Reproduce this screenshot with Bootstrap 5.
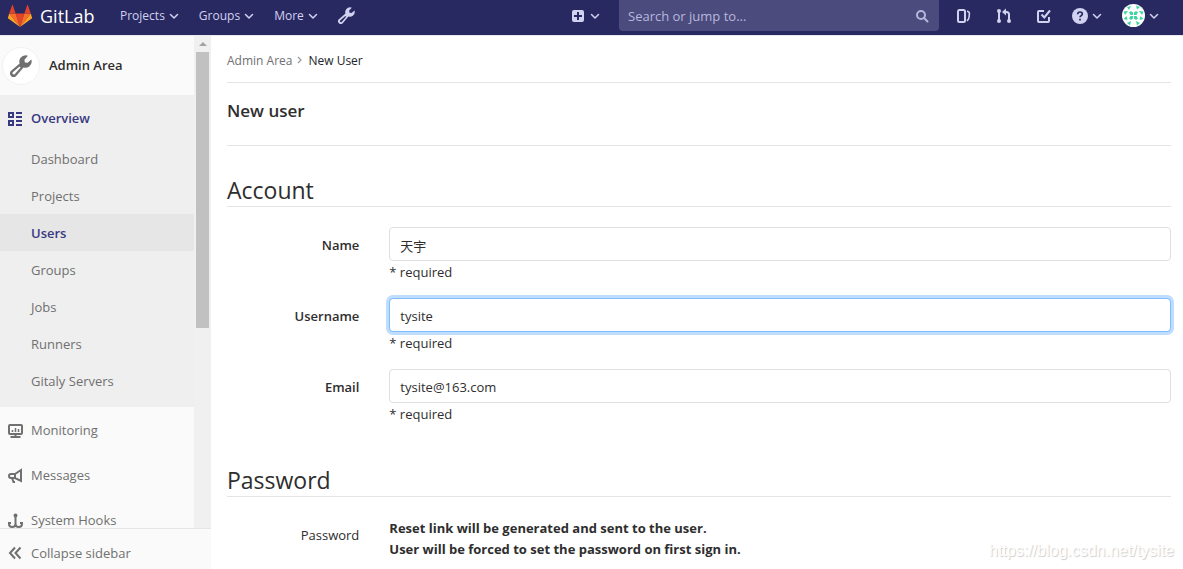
<!DOCTYPE html>
<html lang="en">
<head>
<meta charset="utf-8">
<meta name="viewport" content="width=device-width, initial-scale=1">
<title>New User · Admin Area · GitLab</title>
<link href="https://cdn.jsdelivr.net/npm/bootstrap@5.3.0/dist/css/bootstrap.min.css" rel="stylesheet">
<style>
body { font-family: "Open Sans", "Noto Sans", "Noto Sans CJK SC", sans-serif; font-size: 13px; line-height: 21px; color: #2e2e2e; }
a { color: inherit; text-decoration: none; }
svg { display: block; flex: none; }
.top-bar { height: 36px; background: #292961; border-bottom: 1px solid #e9e9ee; color: #d1d1f0; flex: none; font-size: 12px; }
.top-bar .side { flex: 1 1 0; }
.brand-name { font-size: 18px; color: #fff; line-height: 30px; width: 56px; }
.top-bar button { background: none; border: 0; padding: 0; color: inherit; font-weight: 500; display: flex; align-items: center; gap: 4px; line-height: 21px; }
.top-bar .menus { gap: 20px; }
.top-bar .new-btn { gap: 6px; margin-right: 19px; }
.search { width: 320px; height: 31px; background: #4b4b7d; border-radius: 0 0 4px 4px; color: #b7b7dd; padding: 0 10px 0 9px; }
.search input { background: none; border: 0; outline: 0; color: inherit; width: 100%; font-size: 13px; padding: 2px 0 0; }
.search input::placeholder { color: #b7b7dd; opacity: 1; }
.end-icons { width: 244px; padding-left: 17px; gap: 20px; }
.end-icons .links { gap: 24px; }
.side-nav { width: 211px; flex: none; background: #fafafa; color: #707070; }
.side-nav a, .collapse-btn { display: flex; align-items: center; gap: 8px; padding: 2px 8px 0; height: 45px; }
.side-nav .context { height: 59px; padding: 0 0 0 2px; gap: 9px; font-weight: 600; color: #2e2e2e; }
.avatar-ring { width: 38px; height: 38px; border-radius: 50%; background: #fff; border: 1px solid #f2f2f2; color: #707070; display: flex; align-items: center; justify-content: center; }
.open-group { background: #efefef; padding-bottom: 8px; }
.open-group .parent { color: #393982; font-weight: 600; }
.open-group .sub { height: 37px; padding-left: 31px; }
.open-group .sub.current { background: #e6e6e6; color: #393982; font-weight: 600; }
.scroll-track { width: 17px; background: #f0f0f0; flex: none; padding: 0 2px; }
.scroll-up { height: 16px; display: flex; align-items: center; justify-content: center; }
.scroll-thumb { height: 56%; background: #c1c1c1; }
.collapse-btn { border: 0; border-top: 1px solid #e5e5e5; background: #fafafa; color: #707070; height: 41px; padding-top: 8px; flex: none; }
.page { padding: 0 12px 0 16px; }
.crumbs { font-size: 12px; height: 47px; padding-top: 2px; border-bottom: 1px solid #e5e5e5; color: #707070; }
.page-title { font-size: 17px; line-height: 24px; font-weight: 600; margin: 0; padding: 16px 0 22px; border-bottom: 1px solid #e5e5e5; }
legend.section { font-size: 23px; line-height: 32px; border-bottom: 1px solid #e5e5e5; margin: 0 0 20px; padding-top: 28px; float: none; }
fieldset + fieldset legend.section { padding-top: 24px; }
.field { --bs-gutter-x: 30px; margin-bottom: 15px; }
.field .lbl { text-align: right; font-weight: 600; padding-top: 8px; }
.field .form-control { height: 34px; font-size: 13px; padding: 7px 10px 5px; color: #2e2e2e; border-color: #dfdfdf; border-radius: 4px; }
.field .form-control:focus { border-color: #80bdff; box-shadow: 0 0 0 3px #bfdeff; }
.field .req, .field .note { padding-top: 1px; }
.watermark { right: 9px; bottom: 8px; font: 16px/20px "Liberation Sans", Arial, sans-serif; color: #fff; text-shadow: 1px 1px 1px #ccc; }
</style>
</head>
<body class="d-flex flex-column vh-100 overflow-hidden">
<svg width="0" height="0" class="position-absolute" aria-hidden="true">
  <symbol id="chev" viewBox="0 0 10 10"><path d="M1.500 3.500 5 7l3.500-3.500" fill="none" stroke="currentColor" stroke-width="1.500" stroke-linecap="round" stroke-linejoin="round"/></symbol>
  <symbol id="wrench" viewBox="0 0 16 16"><path fill="currentColor" fill-rule="evenodd" d="M11.500.2a4.600 4.600 0 0 0-4.500 6L.8 11.500a2.600 2.600 0 1 0 3.700 3.700l5.300-6.200A4.600 4.600 0 0 0 15.800 4.500l-.3-1.300-2.700 2.500-2-.3-.3-2L13 .6zM7 8.400l.7.700-4.300 4.900a1 1 0 0 1-1.400-1.400z"/></symbol>
</svg>
<header class="top-bar d-flex">
  <div class="side d-flex align-items-center ps-2 pb-1">
    <a href="#" class="d-flex align-items-center gap-2 me-4" aria-label="GitLab home">
      <svg width="24" height="22" viewBox="0 0 24 22"><path fill="#e24329" d="m12 22 4.400-13.500H7.600z"/><path fill="#fc6d26" d="M12 22 7.600 8.500H1.200zM12 22l4.400-13.500h6.400z"/><path fill="#fca326" d="M1.200 8.500 0 12.600c-.1.400 0 .8.300 1L12 22zM22.800 8.500l1.200 4.100c.1.400 0 .8-.3 1L12 22z"/><path fill="#e24329" d="M1.200 8.500h6.400L4.900.4c-.2-.4-.8-.4-.9 0zM22.800 8.500h-6.400L19.100.4c.2-.4.8-.4.9 0z"/></svg>
      <span class="brand-name">GitLab</span>
    </a>
    <nav class="menus d-flex align-items-center" aria-label="Main">
      <button type="button">Projects <svg width="10" height="10"><use href="#chev"/></svg></button>
      <button type="button">Groups <svg width="10" height="10"><use href="#chev"/></svg></button>
      <button type="button">More <svg width="10" height="10"><use href="#chev"/></svg></button>
      <a href="#" aria-label="Admin area"><svg width="17" height="17"><use href="#wrench"/></svg></a>
    </nav>
    <button type="button" class="new-btn ms-auto" aria-label="New">
      <svg width="12" height="12" viewBox="0 0 12 12"><path fill="currentColor" fill-rule="evenodd" d="M2 0h8a2 2 0 0 1 2 2v8a2 2 0 0 1-2 2H2a2 2 0 0 1-2-2V2a2 2 0 0 1 2-2zm3 2v3H2v2h3v3h2V7h3V5H7V2z"/></svg>
      <svg width="10" height="10"><use href="#chev"/></svg></button>
  </div>
  <form class="search d-flex align-items-center">
    <input type="text" placeholder="Search or jump to..." aria-label="Search or jump to">
    <svg width="14" height="14" viewBox="0 0 14 14" fill="none" stroke="currentColor" stroke-width="2"><circle cx="6" cy="6" r="4"/><path d="m9 9 3.500 3.500" stroke-linecap="round"/></svg>
  </form>
  <div class="end-icons d-flex align-items-center pb-1">
    <div class="links d-flex">
    <a href="#" aria-label="Issues"><svg width="16" height="16" viewBox="0 0 16 16" fill="none" stroke="currentColor" stroke-width="2"><rect x="2" y="2" width="7" height="12" rx="1.500"/><path d="M11 3.200c1.800.3 2.500.9 2.400 2.300l-.3 3.500c-.2 1.800-.8 3-2.300 3.800" stroke-width="1.600"/></svg></a>
    <a href="#" aria-label="Merge requests"><svg width="16" height="16" viewBox="0 0 16 16" fill="none" stroke="currentColor" stroke-width="2"><path d="M3 3v10M9 4h1.500Q13 4 13 6.500V13"/><path d="M10 .5v7L6 4z" fill="currentColor" stroke="none"/><g fill="currentColor" stroke="none"><circle cx="3" cy="3" r="2"/><circle cx="3" cy="13" r="2"/><circle cx="13" cy="13" r="2"/></g></svg></a>
    <a href="#" aria-label="To-do list"><svg width="16" height="16" viewBox="0 0 16 16" fill="none" stroke="currentColor" stroke-width="2"><path d="M8 3H3Q2 3 2 4v9q0 1 1 1h9q1 0 1-1V9"/><path d="m5.500 6.500 2.800 3L14 2.500"/></svg></a>
    </div>
    <button type="button" aria-label="Help"><svg width="16" height="16" viewBox="0 0 16 16"><circle cx="8" cy="8" r="8" fill="currentColor"/><path d="M5.700 6.200C5.800 4.600 6.800 4 8 4s2.300.8 2.300 2c0 1.600-2.200 1.600-2.200 3.200M8 10.800v1.800" fill="none" stroke="#292961" stroke-width="1.700"/></svg><svg width="10" height="10"><use href="#chev"/></svg></button>
    <button type="button" aria-label="Account"><svg width="23" height="23" viewBox="0 0 23 23"><circle cx="11.500" cy="11.500" r="11.500" fill="#fff"/><path fill="#3dd6a0" d="M7 8.500 9 7l2 1.500V11H8.500zM12 8.500 14 7l2 1.500L14.500 11H12zM7 14.500 8.500 12H11v2.500L9 16zM12 12h2.500l1.500 2.500-2 1.500-2-1.500zM5 3l4-1-2 4zM14 1.500l4 1.500-3 2.500zM1.500 7.500 6 7l-3 4zM21.500 7.500 17 7l3 4zM1.500 15l3-3 1 4zM21.500 15l-3-3-1 4zM5 19l4-2-1 4.500zM18 19l-4-2 1 4.500z"/></svg><svg width="10" height="10"><use href="#chev"/></svg></button>
  </div>
</header>
<div class="d-flex flex-grow-1 overflow-hidden">
  <aside class="side-nav d-flex flex-column">
    <div class="d-flex flex-grow-1 overflow-hidden">
      <nav class="flex-grow-1 overflow-hidden" aria-label="Admin">
        <a href="#" class="context"><span class="avatar-ring"><svg width="22" height="22"><use href="#wrench"/></svg></span>Admin Area</a>
        <div class="open-group">
          <a href="#" class="parent"><svg width="15" height="16" viewBox="0 0 15 16" fill="none" stroke="currentColor" stroke-width="2"><path d="M1 2h4v4H1zM1 10h4v4H1zM8 2h6M8 6h6M8 10h6M8 14h6"/></svg>Overview</a>
          <a href="#" class="sub">Dashboard</a>
          <a href="#" class="sub">Projects</a>
          <a href="#" class="sub current" aria-current="page">Users</a>
          <a href="#" class="sub">Groups</a>
          <a href="#" class="sub">Jobs</a>
          <a href="#" class="sub">Runners</a>
          <a href="#" class="sub">Gitaly Servers</a>
        </div>
        <a href="#"><svg width="15" height="16" viewBox="0 0 15 16" fill="none" stroke="currentColor" stroke-width="2"><rect x="1" y="2" width="13" height="9" rx="1"/><path d="M7.500 11v3M2.500 14h10"/><path stroke-width="1.500" d="M4.500 7v2M7.500 5v4M10.500 6v3"/></svg>Monitoring</a>
        <a href="#"><svg width="15" height="16" viewBox="0 0 15 16" fill="none" stroke="currentColor" stroke-width="2"><path d="M13 2v11L7 10H3Q1 10 1 8t2-2h4zM7 6v4M4 10l1.500 4H7"/></svg>Messages</a>
        <a href="#"><svg width="15" height="16" viewBox="0 0 15 16" fill="none" stroke="currentColor" stroke-width="2"><circle cx="7.500" cy="2.500" r="1"/><path d="M7.500 3v11M1 9v2q0 3 3.200 3 3.300 0 3.300-3 0 3 3.300 3Q14 14 14 11V9M0 10h3M12 10h3"/></svg>System Hooks</a>
      </nav>
      <div class="scroll-track" aria-hidden="true">
        <div class="scroll-up"><svg width="8" height="4" viewBox="0 0 8 4"><path d="M0 4 4 0l4 4z" fill="#a3a3a3"/></svg></div>
        <div class="scroll-thumb"></div>
      </div>
    </div>
    <button type="button" class="collapse-btn"><svg width="15" height="14" viewBox="0 0 15 14" fill="none" stroke="currentColor" stroke-width="2"><path d="M7 1.500 2 7l5 5.500M12.500 1.500 7.500 7l5 5.500"/></svg>Collapse sidebar</button>
  </aside>
  <main class="page flex-grow-1 overflow-hidden">
    <nav class="crumbs d-flex align-items-center" aria-label="breadcrumb">
      <a href="#">Admin Area</a>
      <svg class="mx-1" width="8" height="8" viewBox="0 0 8 8"><path d="m2 1 3 3-3 3" fill="none" stroke="#9a9a9a" stroke-width="1.200"/></svg>
      <a href="#" class="current-crumb fw-medium text-dark">New User</a>
    </nav>
    <h1 class="page-title">New user</h1>
    <form>
      <fieldset>
        <legend class="section">Account</legend>
        <div class="row field">
          <label class="col-2 lbl" for="name">Name</label>
          <div class="col-10"><input class="form-control" id="name" type="text" value="天宇"><div class="req">* required</div></div>
        </div>
        <div class="row field">
          <label class="col-2 lbl" for="username">Username</label>
          <div class="col-10"><input class="form-control" id="username" type="text" value="tysite" autofocus><div class="req">* required</div></div>
        </div>
        <div class="row field">
          <label class="col-2 lbl" for="email">Email</label>
          <div class="col-10"><input class="form-control" id="email" type="text" value="tysite@163.com"><div class="req">* required</div></div>
        </div>
      </fieldset>
      <fieldset>
        <legend class="section">Password</legend>
        <div class="row field">
          <div class="col-2 lbl fw-normal">Password</div>
          <div class="col-10 note fw-bold">Reset link will be generated and sent to the user.<br>User will be forced to set the password on first sign in.</div>
        </div>
      </fieldset>
    </form>
  </main>
</div>
<div class="watermark position-absolute">https://blog.csdn.net/tysite</div>
<script src="https://cdn.jsdelivr.net/npm/bootstrap@5.3.0/dist/js/bootstrap.bundle.min.js"></script>
</body>
</html>
